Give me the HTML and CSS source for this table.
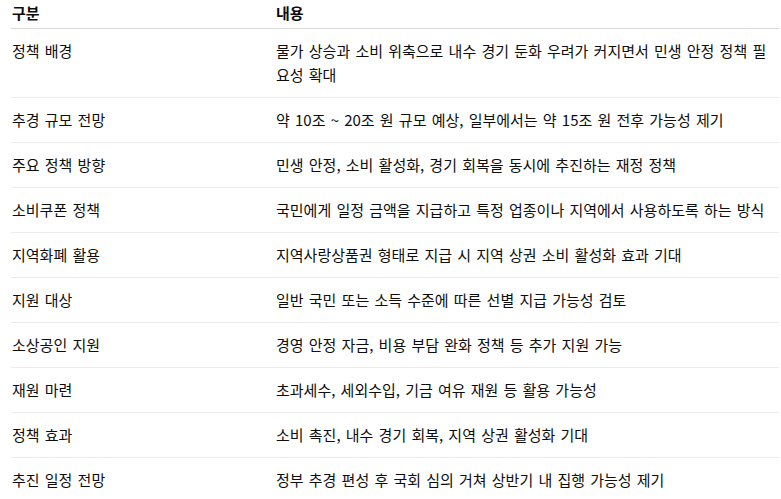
FILE: index.html
```html
<!DOCTYPE html>
<html lang="ko">
<head>
<meta charset="utf-8">
<link rel="stylesheet" href="styles.css">
</head>
<body>
<table class="tbl">
  <thead>
    <tr><th class="c1">구분</th><th class="c2">내용</th></tr>
  </thead>
  <tbody>
    <tr><td>정책 배경</td><td>물가 상승과 소비 위축으로 내수 경기 둔화 우려가 커지면서 민생 안정 정책 필요성 확대</td></tr>
    <tr><td>추경 규모 전망</td><td>약 10조 ~ 20조 원 규모 예상, 일부에서는 약 15조 원 전후 가능성 제기</td></tr>
    <tr><td>주요 정책 방향</td><td>민생 안정, 소비 활성화, 경기 회복을 동시에 추진하는 재정 정책</td></tr>
    <tr><td>소비쿠폰 정책</td><td>국민에게 일정 금액을 지급하고 특정 업종이나 지역에서 사용하도록 하는 방식</td></tr>
    <tr><td>지역화폐 활용</td><td>지역사랑상품권 형태로 지급 시 지역 상권 소비 활성화 효과 기대</td></tr>
    <tr><td>지원 대상</td><td>일반 국민 또는 소득 수준에 따른 선별 지급 가능성 검토</td></tr>
    <tr><td>소상공인 지원</td><td>경영 안정 자금, 비용 부담 완화 정책 등 추가 지원 가능</td></tr>
    <tr><td>재원 마련</td><td>초과세수, 세외수입, 기금 여유 재원 등 활용 가능성</td></tr>
    <tr><td>정책 효과</td><td>소비 촉진, 내수 경기 회복, 지역 상권 활성화 기대</td></tr>
    <tr><td>추진 일정 전망</td><td>정부 추경 편성 후 국회 심의 거쳐 상반기 내 집행 가능성 제기</td></tr>
  </tbody>
</table>
</body>
</html>
```

FILE: styles.css
```css
html, body {
  margin: 0;
  padding: 0;
  background: #ffffff;
}
body {
  font-family: "Noto Sans CJK KR", "Noto Sans", sans-serif;
  font-size: 15px;
  word-spacing: 1px;
  color: #0d0d0d;
}
.tbl {
  margin-left: 11px;
  width: 768px;
  border-collapse: collapse;
  table-layout: fixed;
}
.tbl th, .tbl td {
  text-align: left;
  vertical-align: top;
  line-height: 24px;
  padding: 10px 8px 10px 1px;
}
.tbl th {
  font-weight: 700;
  padding-top: 1px;
  padding-bottom: 3px;
  border-bottom: 1px solid #d9d9d9;
}
.tbl td {
  border-bottom: 1px solid #ececec;
}
.c1 { width: 255px; }
```
